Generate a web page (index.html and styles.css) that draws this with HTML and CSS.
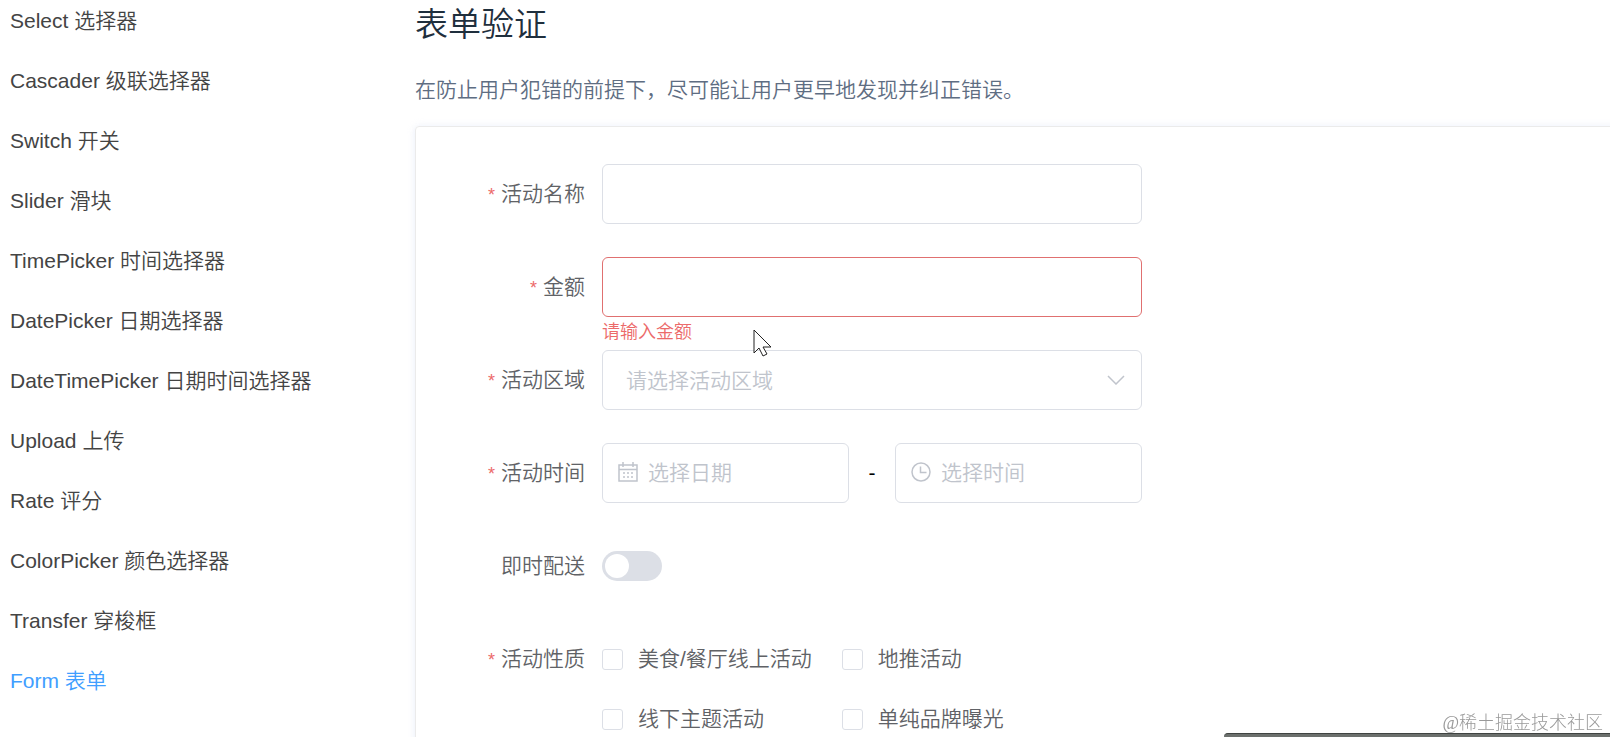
FILE: index.html
```html
<!DOCTYPE html>
<html lang="zh-CN">

<head>
    <meta charset="UTF-8">
    <title>Form 表单</title>
    <link rel="stylesheet" href="styles.css">
</head>

<body>

    <div class="page">
        <nav class="side-nav">
            <a href="#select">Select 选择器</a>
            <a href="#cascader">Cascader 级联选择器</a>
            <a href="#switch">Switch 开关</a>
            <a href="#slider">Slider 滑块</a>
            <a href="#time-picker">TimePicker 时间选择器</a>
            <a href="#date-picker">DatePicker 日期选择器</a>
            <a href="#datetime-picker">DateTimePicker 日期时间选择器</a>
            <a href="#upload">Upload 上传</a>
            <a href="#rate">Rate 评分</a>
            <a href="#color-picker">ColorPicker 颜色选择器</a>
            <a href="#transfer">Transfer 穿梭框</a>
            <a href="#form" class="active">Form 表单</a>
        </nav>

        <main class="content">
            <h3>表单验证</h3>
            <p>在防止用户犯错的前提下，尽可能让用户更早地发现并纠正错误。</p>

            <div class="demo-block">
                <form class="form">
                    <div class="form-item required">
                        <label class="form-label" for="name">活动名称</label>
                        <div class="form-content">
                            <input type="text" class="input" id="name">
                        </div>
                    </div>

                    <div class="form-item required error">
                        <label class="form-label" for="amount">金额</label>
                        <div class="form-content">
                            <input type="text" class="input" id="amount">
                            <div class="form-error">请输入金额</div>
                        </div>
                    </div>

                    <div class="form-item required">
                        <label class="form-label" for="region">活动区域</label>
                        <div class="form-content">
                            <select class="input select" id="region">
                                <option>请选择活动区域</option>
                            </select>
                            <svg class="arrow" viewBox="0 0 18 10"><path d="M1 1l8 8 8-8" /></svg>
                        </div>
                    </div>

                    <div class="form-item required">
                        <label class="form-label" for="date">活动时间</label>
                        <div class="form-content date-row">
                            <div class="picker">
                                <svg class="prefix" viewBox="0 0 20 20">
                                    <path d="M1 3h18v16H1zM1 7.500h18M5 0v5M15 0v5" />
                                    <path d="M5 11h2M9 11h2M13 11h2M5 15h2M9 15h2M13 15h2" />
                                </svg>
                                <input type="text" class="input" id="date" placeholder="选择日期">
                            </div>
                            <span class="line">-</span>
                            <div class="picker">
                                <svg class="prefix" viewBox="0 0 20 20">
                                    <circle cx="10" cy="10" r="9" />
                                    <path d="M9.500 4.500v6h6" />
                                </svg>
                                <input type="text" class="input" id="time" placeholder="选择时间" aria-label="选择时间">
                            </div>
                        </div>
                    </div>

                    <div class="form-item">
                        <label class="form-label" for="delivery">即时配送</label>
                        <div class="form-content switch-row">
                            <input type="checkbox" class="switch" id="delivery">
                        </div>
                    </div>

                    <div class="form-item required">
                        <span class="form-label">活动性质</span>
                        <div class="form-content checkbox-group">
                            <label><input type="checkbox">美食/餐厅线上活动</label>
                            <label><input type="checkbox">地推活动</label>
                            <label><input type="checkbox">线下主题活动</label>
                            <label><input type="checkbox">单纯品牌曝光</label>
                        </div>
                    </div>
                </form>
            </div>
        </main>
    </div>

    <svg class="cursor" viewBox="0 0 20 28">
        <path d="M1 1v23l5-5 4 8 4-2-4-7h8z" />
    </svg>
    <div class="watermark">@稀土掘金技术社区</div>
    <div class="bottom-bar"></div>

</body>

</html>
```

FILE: styles.css
```css
* {
    box-sizing: border-box;
}

body {
    margin: 0;
    font-family: "Liberation Sans", "Noto Sans CJK SC", sans-serif;
    font-size: 21px;
    font-weight: 350;
    color: #606266;
    background-color: #fff;
}

.page {
    display: flex;
    height: 100vh;
    overflow: hidden;
}

.side-nav {
    display: flex;
    flex-direction: column;
    flex: none;
    gap: 18px;
    width: 415px;
    padding-left: 10px;
}

.side-nav a {
    flex: none;
    line-height: 42px;
    color: #444;
    text-decoration: none;
}

.side-nav a.active {
    color: #409eff;
}

.content {
    flex: 1;
    min-width: 0;
}

h3 {
    margin: 0;
    font-size: 33px;
    font-weight: 350;
    line-height: 50px;
    color: #1f2f3d;
}

p {
    margin: 22px 0 18px;
    line-height: 36px;
    color: #5e6d82;
}

.demo-block {
    margin-right: -20px;
    padding: 37px 36px;
    border: 1px solid #ebebeb;
    border-radius: 4px;
    box-shadow: 0 0 8px rgba(232, 237, 250, 0.6), 0 2px 4px rgba(232, 237, 250, 0.5);
}

.form {
    max-width: 690px;
}

.form-item {
    display: flex;
    margin-bottom: 33px;
}

.form-label {
    flex: none;
    width: 150px;
    padding-right: 17px;
    line-height: 60px;
    text-align: right;
}

.required .form-label::before {
    content: "*";
    margin-right: 6px;
    font-size: 18px;
    line-height: 1;
    color: #ec6a6a;
}

.form-content {
    position: relative;
    flex: 1;
    min-width: 0;
}

.input {
    display: block;
    width: 100%;
    height: 60px;
    padding: 0 23px;
    border: 1px solid #dcdfe6;
    border-radius: 6px;
    outline: none;
    background-color: #fff;
    font: inherit;
    color: #606266;
}

.input::placeholder {
    color: #c0c4cc;
}

.error .input {
    border-color: #e07070;
}

.form-error {
    position: absolute;
    top: 100%;
    left: 0;
    font-size: 18px;
    line-height: 30px;
    color: #ec6a6a;
}

.select {
    appearance: none;
    color: #c0c4cc;
}

.arrow,
.prefix {
    position: absolute;
    fill: none;
    stroke: #c0c4cc;
    stroke-width: 1.5;
}

.arrow {
    top: 25px;
    right: 17px;
    width: 18px;
    height: 10px;
}

.date-row {
    display: flex;
}

.picker {
    position: relative;
    flex: 1;
    min-width: 0;
}

.picker .input {
    padding-left: 45px;
}

.prefix {
    top: 19px;
    left: 16px;
    width: 20px;
    height: 20px;
}

.line {
    width: 46px;
    line-height: 60px;
    text-align: center;
    color: #000;
}

.switch-row {
    display: flex;
    align-items: center;
}

.switch {
    appearance: none;
    width: 60px;
    height: 30px;
    margin: 0;
    padding: 3px;
    border-radius: 15px;
    background-color: #dcdfe6;
}

.switch::before {
    content: "";
    display: block;
    width: 24px;
    height: 24px;
    border-radius: 50%;
    background-color: #fff;
}

.switch:checked {
    padding-left: 33px;
    background-color: #409eff;
}

.checkbox-group {
    display: grid;
    grid-template-columns: auto auto;
    justify-content: start;
    column-gap: 30px;
}

.checkbox-group label {
    display: flex;
    align-items: center;
    line-height: 60px;
}

.checkbox-group input {
    appearance: none;
    width: 21px;
    height: 21px;
    margin: 0 15px 0 0;
    border: 1px solid #dcdfe6;
    border-radius: 3px;
    background-color: #fff;
}

.checkbox-group input:checked {
    background-color: #409eff;
}

.cursor {
    position: absolute;
    top: 329px;
    left: 753px;
    width: 20px;
    height: 28px;
    fill: #fff;
    stroke: #222;
}

.watermark {
    position: fixed;
    right: 7px;
    bottom: 2px;
    font-family: "Liberation Serif", "Noto Sans CJK SC", serif;
    font-size: 18px;
    font-weight: 300;
    line-height: 24px;
    color: #999;
}

/* edge of the window below */
.bottom-bar {
    position: fixed;
    right: 0;
    bottom: 0;
    width: 386px;
    height: 4px;
    border-top: 1px solid #3f4341;
    border-top-left-radius: 4px;
    background-color: #6c706d;
}
```
